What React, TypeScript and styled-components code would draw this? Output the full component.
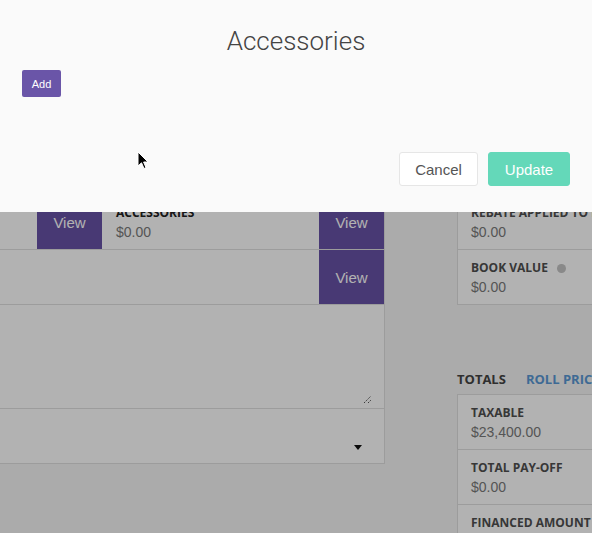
import React from 'react'
import styled, { createGlobalStyle } from 'styled-components'

const GlobalStyle = createGlobalStyle`
  html, body {
    margin: 0;
    padding: 0;
    background: #f5f5f5;
    overflow: hidden;
  }
  * {
    box-sizing: border-box;
  }
`

const Screen = styled.div`
  position: relative;
  width: 592px;
  height: 533px;
  overflow: hidden;
  font-family: 'Liberation Sans', Arial, sans-serif;
`

const Page = styled.div`
  display: grid;
  grid-template-columns: 385px 1fr;
  column-gap: 72px;
  align-items: start;
  padding-top: 195px;
  width: 700px;
`

const LeftPanel = styled.div`
  background: #fff;
  border-right: 1px solid #e0e0e0;
  border-bottom: 1px solid #e0e0e0;
  display: flex;
  flex-direction: column;
`

const Row = styled.div<{ $height: number }>`
  display: flex;
  align-items: stretch;
  height: ${(p) => p.$height}px;
  border-bottom: 1px solid #e0e0e0;
  &:last-child {
    border-bottom: none;
  }
`

const Spacer = styled.div<{ $width?: number }>`
  flex: ${(p) => (p.$width ? `0 0 ${p.$width}px` : '1 1 auto')};
`

const ViewButton = styled.button`
  flex: 0 0 65px;
  border: none;
  margin: 0;
  padding: 0;
  background: #6852a6;
  color: #fff;
  font-family: 'Liberation Sans', Arial, sans-serif;
  font-size: 15px;
`

const Field = styled.div`
  flex: 1 1 auto;
  padding: 11px 14px 0;
  display: flex;
  flex-direction: column;
`

const FieldLabel = styled.div<{ $dark?: boolean }>`
  font-family: 'Open Sans', 'Liberation Sans', sans-serif;
  font-weight: 700;
  font-size: 12px;
  line-height: 14px;
  color: ${(p) => (p.$dark ? '#222' : '#4f4f4f')};
  display: flex;
  align-items: center;
  white-space: nowrap;
`

const FieldValue = styled.div`
  margin-top: 3px;
  font-size: 14px;
  line-height: 18px;
  color: #7a7a7a;
`

const TextArea = styled.div`
  flex: 1 1 auto;
  display: flex;
  justify-content: flex-end;
  align-items: flex-end;
  padding: 0 12px 4px 0;
`

const SelectBox = styled.div`
  flex: 1 1 auto;
  display: flex;
  justify-content: flex-end;
  align-items: flex-end;
  padding: 0 22px 13px 0;
`

const Caret = styled.span`
  width: 0;
  height: 0;
  border-left: 4px solid transparent;
  border-right: 4px solid transparent;
  border-top: 5px solid #111;
`

const RightCol = styled.div`
  display: flex;
  flex-direction: column;
`

const Card = styled.div<{ $closed?: boolean }>`
  background: #fff;
  border: 1px solid #e0e0e0;
  border-top: ${(p) => (p.$closed ? '1px solid #e0e0e0' : 'none')};
  display: flex;
  flex-direction: column;
`

const Item = styled.div`
  padding: 11px 13px 8px;
  border-bottom: 1px solid #e0e0e0;
  &:last-child {
    border-bottom: none;
  }
`

const InfoDot = styled.span`
  display: inline-block;
  width: 9px;
  height: 9px;
  border-radius: 50%;
  background: #c4c4c4;
  margin-left: 9px;
`

const TotalsHeader = styled.div`
  display: flex;
  gap: 20px;
  margin: 64px 0 5px;
  font-family: 'Open Sans', 'Liberation Sans', sans-serif;
  font-weight: 700;
  font-size: 13px;
  line-height: 20px;
  white-space: nowrap;
`

const HeaderTab = styled.span<{ $link?: boolean }>`
  color: ${(p) => (p.$link ? '#5a98d5' : '#444')};
`

const Overlay = styled.div`
  position: absolute;
  inset: 0;
  background: rgba(0, 0, 0, 0.3);
`

const Modal = styled.div`
  position: absolute;
  top: 0;
  left: 0;
  right: 0;
  height: 212px;
  background: #fafafa;
  padding: 0 22px 26px;
  display: flex;
  flex-direction: column;
`

const Title = styled.h2`
  margin: 26px 0 0;
  text-align: center;
  font-family: Roboto, 'Liberation Sans', sans-serif;
  font-weight: 300;
  font-size: 26px;
  line-height: 30px;
  color: #444;
`

const AddButton = styled.button`
  align-self: flex-start;
  margin-top: 14px;
  height: 27px;
  width: 39px;
  padding: 0;
  border: none;
  border-radius: 2px;
  background: #6a55a8;
  color: #fff;
  font-family: 'Liberation Sans', Arial, sans-serif;
  font-size: 11px;
`

const Footer = styled.div`
  margin-top: auto;
  display: flex;
  justify-content: flex-end;
  gap: 10px;
`

const FooterButton = styled.button<{ $primary?: boolean }>`
  height: 34px;
  width: ${(p) => (p.$primary ? 82 : 79)}px;
  padding: 0;
  border-radius: 3px;
  border: 1px solid ${(p) => (p.$primary ? '#64d8b9' : '#e6e6e6')};
  background: ${(p) => (p.$primary ? '#64d8b9' : '#fff')};
  color: ${(p) => (p.$primary ? '#fff' : '#555')};
  font-family: 'Liberation Sans', Arial, sans-serif;
  font-size: 15px;
`

const Cursor = styled.svg`
  position: absolute;
  left: 137px;
  top: 151px;
`

const ResizeHandle = () => (
  <svg width="9" height="9" viewBox="0 0 9 9">
    <path d="M1 8 L8 1 M5 8 L8 5" stroke="#555" strokeWidth="1" strokeDasharray="1.5 1" />
  </svg>
)

export default function App() {
  return (
    <Screen>
      <GlobalStyle />
      <Page>
        <LeftPanel>
          <Row $height={55}>
            <Spacer $width={37} />
            <ViewButton>View</ViewButton>
            <Field>
              <FieldLabel $dark>ACCESSORIES</FieldLabel>
              <FieldValue>$0.00</FieldValue>
            </Field>
            <ViewButton>View</ViewButton>
          </Row>
          <Row $height={55}>
            <Spacer />
            <ViewButton>View</ViewButton>
          </Row>
          <Row $height={104}>
            <TextArea>
              <ResizeHandle />
            </TextArea>
          </Row>
          <Row $height={54}>
            <SelectBox>
              <Caret />
            </SelectBox>
          </Row>
        </LeftPanel>
        <RightCol>
          <Card>
            <Item>
              <FieldLabel>REBATE APPLIED TO PRICE</FieldLabel>
              <FieldValue>$0.00</FieldValue>
            </Item>
            <Item>
              <FieldLabel>
                BOOK VALUE <InfoDot />
              </FieldLabel>
              <FieldValue>$0.00</FieldValue>
            </Item>
          </Card>
          <TotalsHeader>
            <HeaderTab>TOTALS</HeaderTab>
            <HeaderTab $link>ROLL PRICE</HeaderTab>
          </TotalsHeader>
          <Card $closed>
            <Item>
              <FieldLabel>TAXABLE</FieldLabel>
              <FieldValue>$23,400.00</FieldValue>
            </Item>
            <Item>
              <FieldLabel>TOTAL PAY-OFF</FieldLabel>
              <FieldValue>$0.00</FieldValue>
            </Item>
            <Item>
              <FieldLabel>FINANCED AMOUNT</FieldLabel>
              <FieldValue>$0.00</FieldValue>
            </Item>
          </Card>
        </RightCol>
      </Page>
      <Overlay />
      <Modal>
        <Title>Accessories</Title>
        <AddButton>Add</AddButton>
        <Footer>
          <FooterButton>Cancel</FooterButton>
          <FooterButton $primary>Update</FooterButton>
        </Footer>
      </Modal>
      <Cursor width="12" height="19" viewBox="0 0 12 19">
        <path
          d="M1 1 L1 15 L4.5 11.8 L7 17.5 L9 16.6 L6.6 11 L11 11 Z"
          fill="#000"
          stroke="#fff"
          strokeWidth="1"
          strokeLinejoin="round"
        />
      </Cursor>
    </Screen>
  )
}
